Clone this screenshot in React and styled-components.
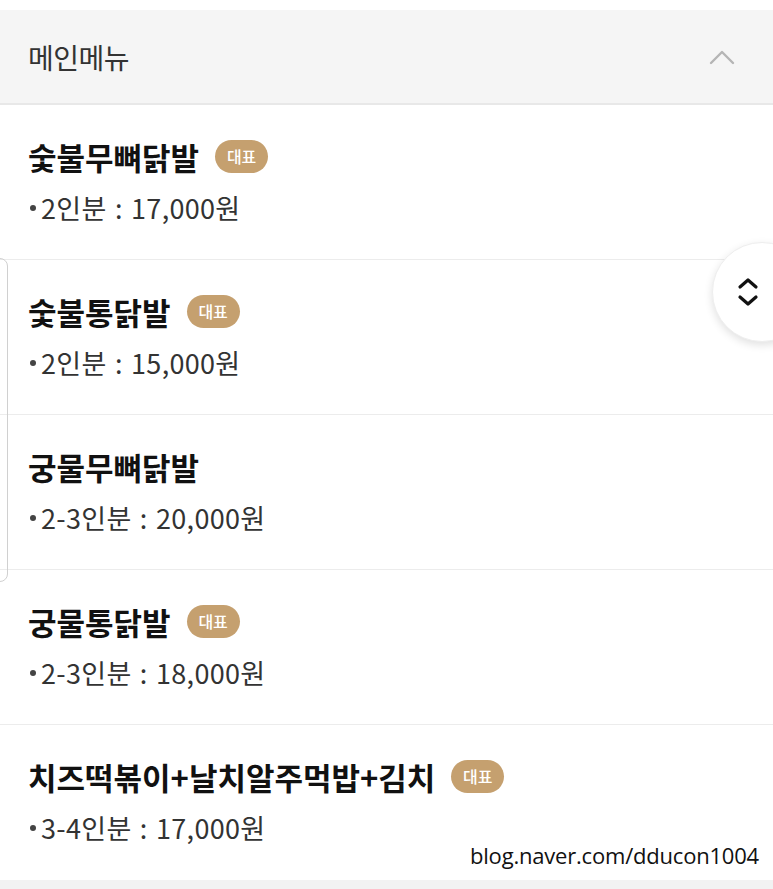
import React from "react";
import styled, { createGlobalStyle } from "styled-components";

const GlobalStyle = createGlobalStyle`
  html, body {
    margin: 0;
    padding: 0;
    background: #ffffff;
  }
  body {
    font-family: "Noto Sans CJK KR", "Noto Sans", sans-serif;
    color: #111;
  }
`;

const Page = styled.div`
  position: relative;
  width: 773px;
  height: 889px;
  overflow: hidden;
  background: #fff;
  padding-top: 10px;
  box-sizing: border-box;
  display: flex;
  flex-direction: column;
`;

const Header = styled.div`
  display: flex;
  align-items: center;
  justify-content: space-between;
  height: 95px;
  padding: 0 38px 0 28px;
  background: #f5f5f5;
  border-bottom: 2px solid #e8e8e8;
  box-sizing: border-box;
`;

const HeaderTitle = styled.span`
  font-size: 28px;
  color: #333;
  letter-spacing: -0.5px;
`;

const List = styled.ul`
  list-style: none;
  margin: 0;
  padding: 0;
  flex: 1;
`;

const Item = styled.li`
  height: 155px;
  padding: 27px 28px 0;
  box-sizing: border-box;
  border-bottom: ${(p) => (p.last ? "none" : "1px solid #ececec")};
`;

const TitleRow = styled.div`
  display: flex;
  align-items: center;
  gap: 16px;
  height: 48px;
`;

const Name = styled.span`
  font-size: 31px;
  font-weight: 700;
  color: #111;
  letter-spacing: 0;
`;

const Badge = styled.span`
  display: inline-flex;
  align-items: center;
  justify-content: center;
  width: 53px;
  height: 33px;
  border-radius: 17px;
  background: #c5a06f;
  color: #fff;
  font-size: 16px;
  font-weight: 500;
`;

const Price = styled.div`
  margin-top: 8px;
  font-size: 27px;
  color: #333;
  letter-spacing: 0.3px;
  display: flex;
  align-items: center;
  word-spacing: 2px;
`;

const Dot = styled.span`
  display: inline-block;
  width: 6px;
  height: 6px;
  border-radius: 50%;
  background: #444;
  margin: 0 5px 0 2px;
`;

const Footer = styled.div`
  height: 9px;
  background: #f2f2f2;
`;

const SideTab = styled.div`
  position: absolute;
  left: -10px;
  top: 258px;
  width: 16px;
  height: 322px;
  border: 1px solid #d0d0d0;
  border-radius: 8px;
  background: transparent;
`;

const FloatButton = styled.button`
  position: absolute;
  left: 712px;
  top: 242px;
  width: 100px;
  height: 100px;
  border-radius: 50%;
  border: 1px solid #eee;
  background: #fff;
  box-shadow: 0 3px 8px rgba(0, 0, 0, 0.12);
  padding: 0 0 0 24px;
  display: flex;
  align-items: center;
  justify-content: flex-start;
`;

const Watermark = styled.div`
  position: absolute;
  left: 462px;
  top: 838px;
  padding: 2px 8px;
  background: rgba(255, 255, 255, 0.85);
  font-family: "Open Sans", "Noto Sans", sans-serif;
  font-size: 22px;
  color: #111;
  letter-spacing: -0.2px;
`;

const menu = [
  { name: "숯불무뼈닭발", badge: true, price: "2인분 : 17,000원" },
  { name: "숯불통닭발", badge: true, price: "2인분 : 15,000원" },
  { name: "궁물무뼈닭발", badge: false, price: "2-3인분 : 20,000원" },
  { name: "궁물통닭발", badge: true, price: "2-3인분 : 18,000원" },
  { name: "치즈떡볶이+날치알주먹밥+김치", badge: true, price: "3-4인분 : 17,000원" },
];

export default function App() {
  return (
    <>
      <GlobalStyle />
      <Page>
        <Header>
          <HeaderTitle>메인메뉴</HeaderTitle>
          <svg width="26" height="16" viewBox="0 0 26 16" fill="none">
            <path d="M2 14 L13 3 L24 14" stroke="#b5b5b5" strokeWidth="2.4" strokeLinecap="round" strokeLinejoin="round" />
          </svg>
        </Header>
        <List>
          {menu.map((m, i) => (
            <Item key={m.name} last={i === menu.length - 1}>
              <TitleRow>
                <Name>{m.name}</Name>
                {m.badge && <Badge>대표</Badge>}
              </TitleRow>
              <Price>
                <Dot />
                {m.price}
              </Price>
            </Item>
          ))}
        </List>
        <Footer />
        <SideTab />
        <FloatButton aria-label="scroll">
          <svg width="22" height="34" viewBox="0 0 22 34" fill="none">
            <path d="M3 12 L11 5 L19 12" stroke="#111" strokeWidth="3.2" strokeLinecap="round" strokeLinejoin="round" />
            <path d="M3 22 L11 29 L19 22" stroke="#111" strokeWidth="3.2" strokeLinecap="round" strokeLinejoin="round" />
          </svg>
        </FloatButton>
        <Watermark>blog.naver.com/dducon1004</Watermark>
      </Page>
    </>
  );
}
